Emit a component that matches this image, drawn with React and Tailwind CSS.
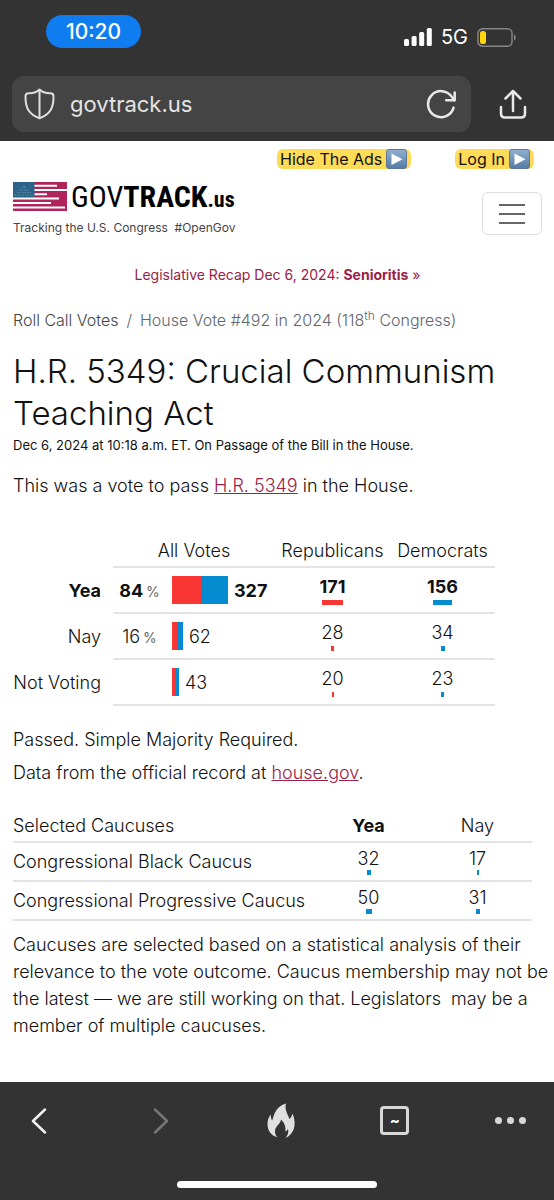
const parties = {
  rep: "bg-[#fb3736]",
  dem: "bg-[#058bcf]",
};

const votes = [
  { label: "Yea", pct: 84, rep: 171, dem: 156, bold: true },
  { label: "Nay", pct: 16, rep: 28, dem: 34 },
  { label: "Not Voting", rep: 20, dem: 23 },
];

const caucuses = [
  { name: "Congressional Black Caucus", yea: 32, nay: 17 },
  { name: "Congressional Progressive Caucus", yea: 50, nay: 31 },
];

function StatusBar() {
  return (
    <div className="flex h-[76px] items-start justify-between pt-[15px] pr-[37px] pl-[46px]">
      <div className="flex h-[33px] w-[95px] items-center justify-center rounded-full bg-[#0f7cf0] text-[21px] font-medium text-white">
        10:20
      </div>
      <div className="flex items-center gap-[9px] pt-[9px] text-white">
        <svg width="28" height="18" viewBox="0 0 28 18" fill="currentColor">
          <rect x="0" y="11" width="5" height="7" rx="1.5" />
          <rect x="7.6" y="8" width="5" height="10" rx="1.5" />
          <rect x="15.2" y="4" width="5" height="14" rx="1.5" />
          <rect x="22.8" y="0" width="5" height="18" rx="1.5" />
        </svg>
        <span className="text-[20px] leading-[26px]">5G</span>
        <svg width="40" height="19" viewBox="0 0 40 19">
          <rect x="1" y="0.8" width="34" height="17.4" rx="4.5" fill="none" stroke="#858585" strokeWidth="1.5" />
          <rect x="3" y="3" width="6" height="13" rx="2.5" fill="#ffd60a" />
          <path d="M37 6.5c2.4 1 2.4 5 0 6z" fill="#858585" />
        </svg>
      </div>
    </div>
  );
}

function AddressBar() {
  return (
    <div className="flex items-center pr-[27px] pl-3">
      <div className="flex h-14 flex-1 items-center rounded-xl bg-[#444] px-3">
        <svg width="32" height="32" viewBox="0 0 32 32" fill="none" stroke="#dedede" strokeWidth="2" strokeLinejoin="round" className="shrink-0">
          <path d="M15.5 1.5C13.5 3.6 10 5.4 4.5 5.2c-2 0-3 1-3 3C1.3 20 5 26.5 15.5 30.2 26 26.5 29.7 20 29.5 8.2c0-2-1-3-3-3-5.5.2-9-1.6-11-3.7z" />
          <path d="M15.5 1.5v28.7" />
        </svg>
        <input
          aria-label="Address"
          defaultValue="govtrack.us"
          className="ml-[14px] w-0 flex-1 bg-transparent text-[22px] text-[#e4e4e4] outline-none"
        />
        <button aria-label="Reload" className="mr-[3px]">
          <svg width="30" height="30" viewBox="0 0 30 30" fill="none" stroke="#e8e8e8" strokeWidth="2.5" strokeLinecap="round" strokeLinejoin="round">
            <path d="M27.6 18.6A13 13 0 1 1 25.6 7.5L28.3 11" />
            <path d="M28.7 3.5v7.8h-8.5" />
          </svg>
        </button>
      </div>
      <button aria-label="Share" className="ml-7">
        <svg width="28" height="30" viewBox="0 0 28 30" fill="none" stroke="#e8e8e8" strokeWidth="2.5" strokeLinecap="round" strokeLinejoin="round">
          <path d="M14 22V2M6.5 9.5L14 2l7.5 7.5M2 18v6.5Q2 28.5 6 28.5h16q4 0 4-4V18" />
        </svg>
      </button>
    </div>
  );
}

function HighlightLink({ children }) {
  return (
    <a href="#" className="flex h-5 items-center gap-1 rounded-md bg-[#ffdb57] pr-1 pl-[3px] text-[16px] font-normal text-[#111]">
      {children}
      <svg width="21" height="20" viewBox="0 0 21 20">
        <defs>
          <linearGradient id="play" x1="0" y1="0" x2="0" y2="1">
            <stop offset="0" stopColor="#8fb0cf" />
            <stop offset="1" stopColor="#557ba5" />
          </linearGradient>
        </defs>
        <rect x="0.5" y="0.5" width="20" height="19" rx="2.5" fill="url(#play)" stroke="#5c7896" />
        <path d="M5.5 4.5v11.5l11-5.7z" fill="#fff" />
      </svg>
    </a>
  );
}

function Logo() {
  return (
    <div className="flex items-center gap-1">
      <svg width="54" height="29" viewBox="0 0 54 29">
        <rect width="54" height="29" fill="#b0245a" />
        <path d="M21 3.7h23M21 8h33M21 12.3h13M0 16.6h46M0 21h38M0 25.5h52" stroke="#fff" strokeWidth="2" />
        <rect width="21.5" height="15" fill="#2c6389" />
        <path d="M2 13h18M4 10.5h14M6 8h10M8.5 5.5h5M11 3v3" stroke="#5d8aa8" strokeWidth="1" strokeDasharray="1.5 1" />
      </svg>
      <span className="flex items-baseline font-['Roboto_Condensed',Roboto,sans-serif] text-[30px] leading-[29px] font-normal text-black">
        GOV<b className="font-bold">TRACK</b>
        <b className="text-[22px] leading-none font-bold">.us</b>
      </span>
    </div>
  );
}

function SiteHeader() {
  return (
    <header>
      <div className="flex justify-end gap-11 pt-2 pr-2">
        <HighlightLink>Hide The Ads</HighlightLink>
        <HighlightLink>Log In</HighlightLink>
      </div>
      <div className="flex items-start justify-between pt-[13px]">
        <div>
          <Logo />
          <p className="mt-[5px] text-[12px] leading-6 font-normal text-[#444]">Tracking the U.S. Congress &nbsp;#OpenGov</p>
        </div>
        <button aria-label="Menu" className="mt-[10px] flex h-[43px] w-[60px] items-center justify-center rounded-md border border-[#dedede]">
          <svg width="26" height="20" viewBox="0 0 26 20" stroke="#666" strokeWidth="2">
            <path d="M0 1h26M0 10h26M0 19h26" />
          </svg>
        </button>
      </div>
      <p className="mt-[23px] text-center text-[14px] leading-6 font-normal">
        <a href="#" className="text-[#9a2148]">
          Legislative Recap Dec 6, 2024: <b className="font-bold">Senioritis</b> »
        </a>
      </p>
    </header>
  );
}

// a number with a thin bar under it, sized by the count
function Count({ value, party, bold, short }) {
  return (
    <div className={`flex flex-col items-center ${bold ? "font-bold" : ""}`}>
      <span className="leading-[22px]">{value}</span>
      <span
        className={`${parties[party]} ${short ? "h-[5px]" : "mt-[2px] h-[5px]"}`}
        style={{ width: Math.max(2, Math.round(value * 0.122)) }}
      />
    </div>
  );
}

function VotesTable() {
  return (
    <table className="mt-[35px] table-fixed text-[18px] text-[#111]">
      <colgroup>
        <col className="w-[100px]" />
        <col className="w-[53px]" />
        <col className="w-[109px]" />
        <col className="w-[115px]" />
        <col className="w-[105px]" />
      </colgroup>
      <thead>
        <tr className="h-8">
          <td />
          <th colSpan={2} className="border-b-2 border-[#e4e4e4] font-light">All Votes</th>
          <th className="border-b-2 border-[#e4e4e4] font-light">Republicans</th>
          <th className="border-b-2 border-[#e4e4e4] font-light">Democrats</th>
        </tr>
      </thead>
      <tbody>
        {votes.map((v) => (
          <tr key={v.label} className={`h-[46px] ${v.bold ? "font-bold" : ""}`}>
            <th className={`pr-3 text-right whitespace-nowrap ${v.bold ? "font-bold" : "font-light"}`}>{v.label}</th>
            <td className="border-b-2 border-[#e4e4e4] text-center">
              {v.pct && (
                <>
                  {v.pct}
                  <span className="ml-[3px] text-[14px] font-normal text-[#666]">%</span>
                </>
              )}
            </td>
            <td className="border-b-2 border-[#e4e4e4] pl-[6px]">
              <div className="flex items-center">
                <span className={`h-7 ${parties.rep}`} style={{ width: Math.round(v.rep * 0.17) }} />
                <span className={`h-7 ${parties.dem}`} style={{ width: Math.round(v.dem * 0.17) }} />
                <span className="ml-[6px]">{v.rep + v.dem}</span>
              </div>
            </td>
            <td className="border-b-2 border-[#e4e4e4]">
              <Count value={v.rep} party="rep" bold={v.bold} />
            </td>
            <td className="border-b-2 border-[#e4e4e4]">
              <Count value={v.dem} party="dem" bold={v.bold} />
            </td>
          </tr>
        ))}
      </tbody>
    </table>
  );
}

function CaucusTable() {
  return (
    <div className="pr-[10px]">
      <table className="mt-[22px] w-full table-fixed text-[18px] text-[#111]">
        <thead>
          <tr className="h-[33px] border-b-2 border-[#e4e4e4]">
            <th className="w-[58%] text-left font-light">Selected Caucuses</th>
            <th className="font-bold">Yea</th>
            <th className="font-light">Nay</th>
          </tr>
        </thead>
        <tbody>
          {caucuses.map((c) => (
            <tr key={c.name} className="h-[39px] border-b-2 border-[#e4e4e4]">
              <th className="text-left font-light whitespace-nowrap">{c.name}</th>
              <td><Count value={c.yea} party="dem" short /></td>
              <td><Count value={c.nay} party="dem" short /></td>
            </tr>
          ))}
        </tbody>
      </table>
    </div>
  );
}

function BottomBar() {
  return (
    <nav className="bg-[#333] pb-3">
      <div className="flex h-[77px] items-center justify-between pr-7 pl-[31px]">
        <button aria-label="Back" className="w-9">
          <svg width="16" height="26" viewBox="0 0 16 26" fill="none" stroke="#f0f0f0" strokeWidth="2.5" strokeLinecap="round" strokeLinejoin="round">
            <path d="M14 1.5L2 13l12 11.5" />
          </svg>
        </button>
        <button aria-label="Forward" className="w-7">
          <svg width="16" height="26" viewBox="0 0 16 26" fill="none" stroke="#777" strokeWidth="2.5" strokeLinecap="round" strokeLinejoin="round">
            <path d="M2 1.5L14 13 2 24.5" />
          </svg>
        </button>
        <button aria-label="Clear data">
          <svg width="28" height="36" viewBox="0 0 28 36" fill="#e0e0e0">
            <path d="M19 .5C17.5 6 20 10 22.5 16c1.5-1.2 2.3-3 2.8-5.2C27 13.5 28 18 27.5 22.5 27 28 23.5 33 18.5 35c2.5-3 3.3-6 2.5-9-.6 1.2-1.4 2-2.6 2.6.5-6-1.4-9-4.4-12.1-.3 4.5-5.7 6.5-6 11.5-.2 2.6.8 4.9 2.500 6.500C4 32.500.6 27.500.5 21.500.4 17.500 1.500 14 4 11.500c-.3 2.500 0 4.500 1.200 6C7.500 10.500 9 3.500 19 .5z" />
          </svg>
        </button>
        <button aria-label="Tabs" className="flex size-[29px] items-center justify-center rounded-[4px] border-[3px] border-[#d8d8d8] text-[15px] leading-none font-bold text-white">
          ~
        </button>
        <button aria-label="More" className="flex gap-[5px]">
          <span className="size-[7px] rounded-full bg-[#d8d8d8]" />
          <span className="size-[7px] rounded-full bg-[#d8d8d8]" />
          <span className="size-[7px] rounded-full bg-[#d8d8d8]" />
        </button>
      </div>
      <div className="mx-auto mt-[22px] h-[7px] w-[36%] rounded-full bg-white" />
    </nav>
  );
}

export default function App() {
  return (
    <div className="flex min-h-screen flex-col bg-white font-['Inter',sans-serif]">
      <div className="bg-[#333] pb-[9px]">
        <StatusBar />
        <AddressBar />
      </div>
      <main className="flex-1 pr-3 pb-10 pl-[13px] text-[18px] font-light text-[#111]">
        <SiteHeader />
        <nav className="mt-[21px] text-[16px] leading-6 text-[#5f666d]">
          <a href="#" className="text-[#444]">Roll Call Votes</a>
          <span className="mx-2">/</span>
          House Vote #492 in 2024 (118<sup>th</sup> Congress)
        </nav>
        <h1 className="mt-[18px] text-[33px] leading-[42px]">H.R. 5349: Crucial Communism Teaching Act</h1>
        <p className="text-[13px] leading-[22px] font-normal">
          Dec 6, 2024 at 10:18 a.m. ET. On Passage of the Bill in the House.
        </p>
        <p className="mt-4 leading-[28px]">
          This was a vote to pass <a href="#" className="text-[#9a2148] underline">H.R. 5349</a> in the House.
        </p>
        <VotesTable />
        <p className="mt-5 leading-[28px]">Passed. Simple Majority Required.</p>
        <p className="mt-[5px] leading-[28px]">
          Data from the official record at <a href="#" className="text-[#9a2148] underline">house.gov</a>.
        </p>
        <CaucusTable />
        <p className="-mr-2 mt-[10px] leading-[27px]">
          Caucuses are selected based on a statistical analysis of their relevance to the vote outcome. Caucus
          membership may not be the latest — we are still working on that. Legislators &nbsp;may be a member of
          multiple caucuses.
        </p>
      </main>
      <BottomBar />
    </div>
  );
}
